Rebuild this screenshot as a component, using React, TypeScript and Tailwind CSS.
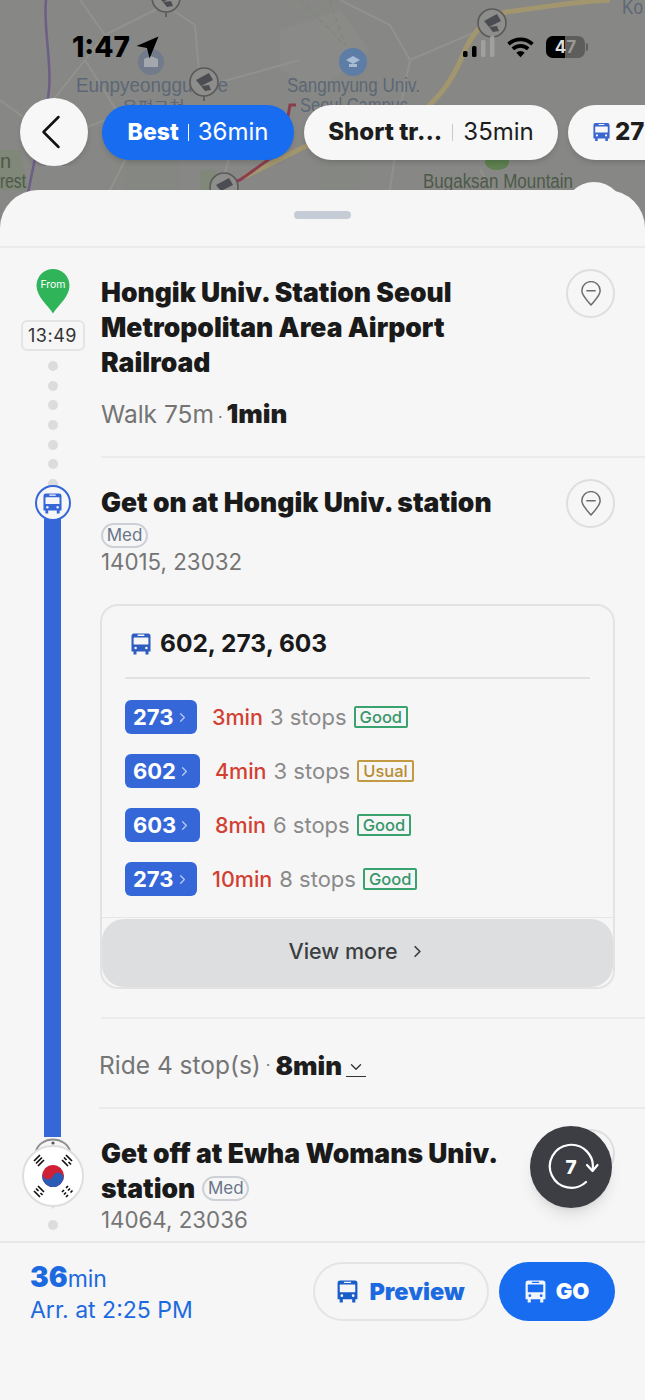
import React from 'react';
import { ChevronLeft, ChevronRight, ChevronDown } from 'lucide-react';

function BusIcon({ className, fill, glass }: { className?: string; fill: string; glass: string }) {
  return (
    <svg viewBox="0 0 20 22" className={className}>
      <path d="M3 0.5h14a2.5 2.5 0 0 1 2.5 2.5v15.5h-2v3h-3v-3h-9v3h-3v-3h-2V3A2.5 2.5 0 0 1 3 0.5z" fill={fill} />
      <rect x="6.5" y="1.6" width="7" height="1.3" rx="0.6" fill={glass} />
      <rect x="2.6" y="4.4" width="14.8" height="7.2" rx="0.6" fill={glass} />
      <circle cx="4.6" cy="15" r="1.3" fill={glass} />
      <circle cx="15.4" cy="15" r="1.3" fill={glass} />
    </svg>
  );
}

function PinButton() {
  return (
    <div className="w-[49px] h-[49px] shrink-0 rounded-full border-2 border-[#dedede] flex items-center justify-center">
      <svg viewBox="0 0 24 28" className="w-[22px] h-[26px]" fill="none" stroke="#6b6b6b" strokeWidth="1.6">
        <path d="M12 26C7 20 2 15.5 2 10.5a10 10 0 0 1 20 0C22 15.5 17 20 12 26z" strokeLinejoin="round" />
        <path d="M7.5 10.5h9" strokeLinecap="round" />
      </svg>
    </div>
  );
}

function MedTag() {
  return (
    <span className="inline-flex items-center justify-center w-[47px] h-[25px] rounded-full border-2 border-[#cdd0d6] text-[17px] leading-none text-[#68758a] font-normal">
      Med
    </span>
  );
}

function Camera({ x, y }: { x: number; y: number }) {
  return (
    <g transform={`translate(${x} ${y})`}>
      <path d="M0 19v-5" stroke="#555" strokeWidth="1.5" />
      <circle r="14" fill="#8d8d8b" stroke="#5a5a5a" strokeWidth="1.6" />
      <path d="M-8 -2L5 -9l4 7-12 6z" fill="#4b4d52" />
      <path d="M-3 4l4 5 6-1-2-5z" fill="#4b4d52" />
    </g>
  );
}

function MapLayer() {
  return (
    <svg viewBox="0 0 645 240" className="absolute inset-0 w-[645px] h-[240px]">
      <rect width="645" height="240" fill="#878785" />
      <path d="M125 120h55v70h-55zM320 130h40v60h-40z" fill="#858882" />
      <path d="M0 150h20l8 40H0zM200 170h16v20h-16z" fill="#7f8879" />
      <path d="M280 30l60-20 30 40-50 40-40-20z" fill="#8a8a88" />
      <g fill="none" stroke="#91918e" strokeWidth="2">
        <path d="M80 0l25 35 60-30 30 20 5 60M105 35L85 60l50 80-30 60M0 100l55 40 50-20M85 60l-40 50" />
        <path d="M340 0l50 25 20 35-10 50M410 60l70-30M400 120l-10 70M240 120l-20 70M300 60l-90 25M480 170l20 30" />
      </g>
      <path d="M300 0l45 45" stroke="#7d8a76" strokeWidth="1.5" strokeDasharray="5 4" fill="none" />
      <path d="M330 0l15 45" stroke="#7d8a76" strokeWidth="1.5" strokeDasharray="5 4" fill="none" />
      <path d="M46 0c-3 25 6 65 3 90-3 30-15 65-22 110" stroke="#6d5e88" strokeWidth="2.5" fill="none" />
      <path d="M610 0c-50 3-85 10-104 12-25 6-38 30-44 45-12 28-25 42-45 60l-113 30-60 30" stroke="#a2966f" strokeWidth="5" fill="none" />
      <path d="M296 105h-6l-8 45-42 30-8 3" stroke="#8c3d4c" strokeWidth="3" fill="none" />
      <circle cx="151" cy="62" r="13" fill="#717b8c" />
      <path d="M144 67v-8l7-3 7 3v8z" fill="#a4a8ae" />
      <circle cx="353" cy="62" r="14" fill="#5d7ca6" />
      <path d="M346 60l7-4 7 4-7 4zM349 64h8v3h-8z" fill="#a8bcd4" />
      <ellipse cx="497" cy="162" rx="12" ry="8" fill="#5e7f4f" />
      <g fontFamily="'Liberation Sans', sans-serif" fontSize="20" fill="#5c6776">
        <text x="76" y="92" textLength="152" lengthAdjust="spacingAndGlyphs">Eunpyeonggu O  e</text>
        <text x="287" y="92" textLength="133" lengthAdjust="spacingAndGlyphs">Sangmyung Univ.</text>
        <text x="300" y="112" textLength="108" lengthAdjust="spacingAndGlyphs">Seoul Campus</text>
        <text x="122" y="114" fontFamily="'Noto Sans CJK KR', sans-serif" fontSize="17">은평구청</text>
        <text x="622" y="14" textLength="21" lengthAdjust="spacingAndGlyphs">Ko</text>
      </g>
      <g fontFamily="'Liberation Sans', sans-serif" fontSize="20" fill="#4d5a48">
        <text x="423" y="188" textLength="150" lengthAdjust="spacingAndGlyphs">Bugaksan Mountain</text>
        <text x="0" y="168">n</text>
        <text x="0" y="188" textLength="26" lengthAdjust="spacingAndGlyphs">rest</text>
      </g>
      <Camera x={166} y={-2} />
      <Camera x={204} y={82} />
      <Camera x={492} y={23} />
      <Camera x={224} y={187} />
      <circle cx="594" cy="212" r="30" fill="#f6f6f6" />
    </svg>
  );
}

function StatusBar() {
  return (
    <div className="relative h-[98px] pt-[32px] pl-[72px] pr-[57px] flex items-start justify-between">
      <div className="flex items-center gap-[6px] h-[30px]">
        <span className="text-[28px] leading-none font-extrabold text-black">1:47</span>
        <svg viewBox="0 0 22 22" className="w-[23px] h-[23px]">
          <path d="M21.5 0.5L13 21.5l-2.5-10L0.5 9.5z" fill="#000" />
        </svg>
      </div>
      <div className="flex items-center h-[30px] gap-[12px]">
        <svg viewBox="0 0 32 22" className="w-[32px] h-[22px]">
          <rect x="0" y="15" width="4.500" height="6" rx="1.5" fill="#000" />
          <rect x="9" y="10" width="4.500" height="11" rx="1.5" fill="#000" />
          <rect x="18" y="4" width="4.500" height="17" rx="1.5" fill="#a0a09e" />
          <rect x="27" y="0" width="4.500" height="21" rx="1.5" fill="#a0a09e" />
        </svg>
        <svg viewBox="0 0 26 20" className="w-[27px] h-[21px]">
          <path d="M13 19.5l-4-4.500a5.500 5.500 0 0 1 8 0zM6.800 12.700L4.400 10a12.500 12.500 0 0 1 17.200 0l-2.400 2.700a9 9 0 0 0-12.400 0zM2.600 8L0.300 5.400a18.600 18.600 0 0 1 25.400 0L23.400 8a15.300 15.300 0 0 0-20.800 0z" fill="#000" />
        </svg>
        <div className="flex items-center">
          <div className="relative w-[39px] h-[22px] rounded-[7px] bg-[#5d5d5b] overflow-hidden flex items-center justify-center">
            <div className="absolute left-0 top-0 bottom-0 w-[19px] bg-black" />
            <span className="relative text-[17px] leading-none font-bold text-[#dddddd]">
              4<span className="text-[#9a9a98]">7</span>
            </span>
          </div>
          <div className="w-[2px] h-[8px] ml-[1px] rounded-r bg-[#5d5d5b]" />
        </div>
      </div>
    </div>
  );
}

function RoutePills() {
  return (
    <div className="relative flex items-center h-[68px] pl-[20px] overflow-hidden">
      <div className="w-[68px] h-[68px] shrink-0 rounded-full bg-[#f7f7f7] flex items-center justify-center shadow-md">
        <ChevronLeft className="w-[60px] h-[60px] shrink-0 -ml-[6px] text-[#111]" strokeWidth={1} />
      </div>
      <div className="ml-[14px] w-[192px] h-[55px] shrink-0 rounded-full bg-[#186cf0] shadow-md flex items-center justify-center text-white text-[24px]">
        <span className="font-extrabold text-[23px]">Best</span>
        <span className="mx-[9px] w-px h-[17px] bg-white" />
        <span className="font-normal">36min</span>
      </div>
      <div className="ml-[10px] w-[254px] h-[55px] shrink-0 rounded-full bg-[#f7f7f7] shadow-md flex items-center justify-center text-[#1d1d1d] text-[24px]">
        <span className="font-extrabold">Short tr...</span>
        <span className="mx-[10px] w-px h-[17px] bg-[#c9c9c9]" />
        <span className="font-normal">35min</span>
      </div>
      <div className="ml-[10px] w-[120px] h-[55px] shrink-0 rounded-full bg-[#f7f7f7] shadow-md flex items-center pl-[25px] gap-[5px] text-[#1d1d1d] text-[24px]">
        <BusIcon className="w-[17px] h-[20px] shrink-0" fill="#3a66cf" glass="#f7f7f7" />
        <span className="font-extrabold">27</span>
      </div>
    </div>
  );
}

function Dot({ className }: { className?: string }) {
  return <div className={`w-[10px] h-[10px] shrink-0 rounded-full bg-[#dcdcdc] ${className ?? ''}`} />;
}

function FromStep() {
  return (
    <div className="flex h-[210px]">
      <div className="w-[101px] shrink-0 pl-[4px] flex flex-col items-center">
        <svg viewBox="0 0 34 45" className="w-[34px] h-[45px] mt-[21px] shrink-0">
          <path d="M17 44.500C12 36 0.500 28 0.500 16.500a16.500 16.500 0 0 1 33 0C33.500 28 22 36 17 44.500z" fill="#2fb45a" />
          <text x="17" y="18.500" textAnchor="middle" fontSize="10.500" fontWeight="400" fill="#ffffff" fontFamily="Inter, sans-serif">From</text>
        </svg>
        <div className="mt-[6px] w-[64px] h-[31px] shrink-0 rounded-[6px] border-2 border-[#e4e4e4] flex items-center justify-center text-[18px] leading-none text-[#333] tracking-[0.5px]">
          13:49
        </div>
        <div className="mt-[10px] flex flex-col items-center gap-[9.7px]">
          <Dot />
          <Dot />
          <Dot />
          <Dot />
          <Dot />
        </div>
      </div>
      <div className="flex-1 pr-[30px] border-b-2 border-[#ebebeb]">
        <div className="flex pt-[21px] justify-between">
          <h2 className="w-[420px] mt-[6px] text-[26.5px] leading-[35px] font-black text-[#1a1a1a]">
            Hongik Univ. Station Seoul Metropolitan Area Airport Railroad
          </h2>
          <PinButton />
        </div>
        <p className="mt-[16px] flex items-baseline text-[24.5px] leading-[35px] text-[#747474]">
          Walk 75m<span className="mx-[4px] text-[16px]">·</span>
          <span className="font-black text-[#1e1e1e] text-[26px]">1min</span>
        </p>
      </div>
    </div>
  );
}

const ARRIVALS = [
  { no: '273', wide: false, min: '3min', stops: '3 stops', tag: 'Good' },
  { no: '602', wide: true, min: '4min', stops: '3 stops', tag: 'Usual' },
  { no: '603', wide: true, min: '8min', stops: '6 stops', tag: 'Good' },
  { no: '273', wide: false, min: '10min', stops: '8 stops', tag: 'Good' },
];

function ArrivalRow({ row }: { row: (typeof ARRIVALS)[number] }) {
  const usual = row.tag === 'Usual';
  return (
    <div className="flex items-center h-[34px]">
      <div className={`${row.wide ? 'w-[75px]' : 'w-[72px]'} h-[34px] shrink-0 rounded-[6px] bg-[#3567d8] flex items-center pl-[8px] text-white text-[22px] font-bold`}>
        {row.no}
        <ChevronRight className="w-[15px] h-[15px] ml-[1px] text-[#b9c9ef]" strokeWidth={2} />
      </div>
      <span className="ml-[15px] text-[21.5px] font-medium text-[#d23f33]">{row.min}</span>
      <span className="ml-[7px] text-[22px] text-[#8a8a8a]">{row.stops}</span>
      <span
        className={`ml-[7px] h-[22px] px-[4px] rounded-[2px] border-2 flex items-center text-[16.5px] leading-none font-medium ${
          usual ? 'border-[#c29a43] text-[#b88d32]' : 'border-[#3aa26e] text-[#37966a]'
        }`}
      >
        {row.tag}
      </span>
    </div>
  );
}

function BoardStep() {
  return (
    <div className="flex h-[561px]">
      <div className="w-[101px] shrink-0 pl-[4px] flex flex-col items-center">
        <Dot className="mt-[1px]" />
        <Dot className="mt-[10px] -mb-[4px]" />
        <div className="relative w-[36px] h-[36px] shrink-0 rounded-full border-[2.5px] border-[#3567d8] bg-[#f6f6f6] flex items-center justify-center">
          <BusIcon className="w-[19px] h-[21px]" fill="#3567d8" glass="#f6f6f6" />
        </div>
        <div className="w-[17px] flex-1 -mt-[2px] bg-[#3567d8]" />
      </div>
      <div className="flex-1 pr-[30px] border-b-2 border-[#ebebeb]">
        <div className="flex pt-[21px] justify-between">
          <div>
            <h2 className="mt-[6px] text-[26.5px] leading-[35px] font-black text-[#1a1a1a]">Get on at Hongik Univ. station</h2>
            <div className="mt-[3px] flex"><MedTag /></div>
            <p className="text-[22.3px] leading-[28px] text-[#757575]">14015, 23032</p>
          </div>
          <PinButton />
        </div>
        <div className="mt-[28px] -ml-[1px] h-[385px] rounded-[18px] border-2 border-[#e3e3e3] flex flex-col overflow-hidden">
          <div className="mx-[23px] h-[73px] shrink-0 border-b-2 border-[#e2e2e2] flex items-center gap-[9px] pl-[6px] pt-[4px]">
            <BusIcon className="w-[20px] h-[22px]" fill="#2f5cc0" glass="#f6f6f6" />
            <span className="text-[24.5px] font-bold text-[#1a1a1a]">602, 273, 603</span>
          </div>
          <div className="pl-[23px] pt-[21px] flex flex-col gap-[20px]">
            {ARRIVALS.map((row, i) => (
              <ArrivalRow key={i} row={row} />
            ))}
          </div>
          <div className="mt-[21px] border-t border-[#e6e6e6] pt-[1px] flex-1 flex">
            <div className="flex-1 rounded-[22px] bg-[#dddedf] flex items-center justify-center gap-[10px] pb-[4px] text-[21.5px] font-medium text-[#3c3e42]">
              View more
              <ChevronRight className="w-[19px] h-[19px]" strokeWidth={2.2} />
            </div>
          </div>
        </div>
      </div>
    </div>
  );
}

function RideStep() {
  return (
    <div className="flex h-[90px]">
      <div className="w-[101px] shrink-0 pl-[4px] flex justify-center">
        <div className="w-[17px] h-full bg-[#3567d8]" />
      </div>
      <div className="flex-1 -ml-[2px] border-b-2 border-[#ebebeb] flex items-center pt-[4px] text-[24.5px] text-[#757575]">
        Ride 4 stop(s)<span className="mx-[5px] text-[16px]">·</span>
        <span className="font-black text-[#1e1e1e] text-[26px]">8min</span>
        <span className="ml-[4px] mt-[4px] border-b border-[#333] h-[20px] flex items-end">
          <ChevronDown className="w-[20px] h-[18px] text-[#333]" strokeWidth={1.8} />
        </span>
      </div>
    </div>
  );
}

function FlagMarker() {
  return (
    <svg viewBox="0 0 64 75" className="w-[64px] h-[75px] shrink-0 -mt-[1px]">
      <path d="M15 15A17.500 15 0 0 1 49 15" fill="none" stroke="#8f8f8f" strokeWidth="2" />
      <circle cx="32" cy="7" r="1.600" fill="#555" />
      <path d="M27 68h10l-5 5z" fill="#e2e2e2" />
      <circle cx="32" cy="40" r="30" fill="#ffffff" stroke="#dedede" strokeWidth="2" />
      <g transform="rotate(22 32 40)">
        <circle cx="32" cy="40" r="11" fill="#cf2038" />
        <path d="M21 40a5.500 5.500 0 0 0 11 0 5.500 5.500 0 0 1 11 0 11 11 0 0 1-22 0z" fill="#2a5bb5" />
      </g>
      <g stroke="#111" strokeWidth="1.700" transform="translate(0 3)">
        <path d="M13 22l6-6M15 24.500l6-6M17 27l6-6" />
        <path d="M45 16l6 6M43 18.500l2.500 2.500M47.500 23l2.500 2.500M41 21l6 6" />
        <path d="M13 52l6 6M15 49.500l2.500 2.500M19.500 54l2 2M17 47l6 6" />
        <path d="M45 58l2-2M49.500 53.500l2-2M43 55.500l2-2M47 51.500l2-2M41 53l2-2M45 49l2-2" />
      </g>
    </svg>
  );
}

function AlightStep() {
  return (
    <div className="flex h-[132px] overflow-hidden">
      <div className="w-[101px] shrink-0 pl-[4px] flex flex-col items-center">
        <div className="w-[17px] h-[28px] shrink-0 bg-[#3567d8]" />
        <FlagMarker />
        <Dot className="mt-[9px]" />
      </div>
      <div className="flex-1 pt-[20px] pr-[30px] flex justify-between">
        <div className="w-[410px] mt-[7px]">
          <h2 className="text-[26.5px] leading-[35px] font-black text-[#1a1a1a]">Get off at Ewha Womans Univ.</h2>
          <div className="flex items-center gap-[7px]">
            <h2 className="text-[26.5px] leading-[35px] font-black text-[#1a1a1a]">station</h2>
            <MedTag />
          </div>
          <p className="text-[22.3px] leading-[28px] text-[#757575]">14064, 23036</p>
        </div>
        <PinButton />
      </div>
    </div>
  );
}

function Footer() {
  return (
    <div className="border-t-2 border-[#e8e8e8] flex h-[158px] pl-[30px] pr-[30px] pt-[19px] justify-between items-start">
      <div className="text-[#1c6ae0]">
        <div className="h-[30px] flex items-baseline text-[23px] font-normal">
          <span className="text-[28px] font-black leading-[30px]">36</span>min
        </div>
        <div className="mt-[2px] text-[23px] leading-[32px]">Arr. at 2:25 PM</div>
      </div>
      <div className="flex gap-[10px]">
        <div className="w-[176px] h-[59px] rounded-full border-2 border-[#e4e4e4] flex items-center justify-center gap-[11px] text-[23.5px] font-black text-[#1c6ae0]">
          <BusIcon className="w-[21px] h-[23px]" fill="#1a5cc8" glass="#f6f6f6" />
          Preview
        </div>
        <div className="w-[116px] h-[59px] rounded-full bg-[#186cf0] flex items-center justify-center gap-[10px] text-[22px] font-black text-white">
          <BusIcon className="w-[21px] h-[23px]" fill="#f2f5fb" glass="#186cf0" />
          GO
        </div>
      </div>
    </div>
  );
}

export default function App() {
  return (
    <div className="relative w-[645px] h-[1400px] overflow-hidden bg-[#f6f6f6] font-['Inter',sans-serif]">
      <MapLayer />
      <StatusBar />
      <RoutePills />
      <div className="relative mt-[24px] h-[1210px] rounded-t-[38px] bg-[#f6f6f6] flex flex-col">
        <div className="h-[58px] shrink-0 border-b-2 border-[#ebebeb] pt-[21px] flex justify-center">
          <div className="w-[57px] h-[8px] rounded-full bg-[#c6ccd6]" />
        </div>
        <FromStep />
        <BoardStep />
        <RideStep />
        <AlightStep />
        <Footer />
      </div>
      <div className="absolute left-[530px] top-[1126px] w-[82px] h-[82px] rounded-full bg-[#3c3e44] shadow-lg flex items-center justify-center">
        <div className="relative w-[50px] h-[50px] flex items-center justify-center">
          <svg viewBox="0 0 56 50" className="absolute left-0 top-0 w-[56px] h-[50px]" fill="none" stroke="#ffffff" strokeWidth="2.2" strokeLinecap="round" strokeLinejoin="round">
            <path d="M40 40A21.500 21.500 0 1 1 46.500 28" />
            <path d="M41 23l5.500 6 5-6" />
          </svg>
          <span className="relative text-[19px] font-extrabold leading-none text-white">7</span>
        </div>
      </div>
    </div>
  );
}
